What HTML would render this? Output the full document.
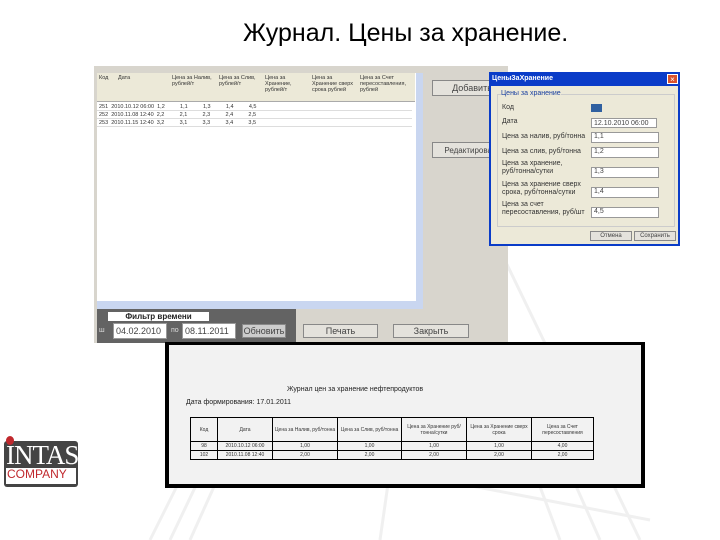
<!DOCTYPE html>
<html><head><meta charset="utf-8"><style>
body{margin:0;width:720px;height:540px;position:relative;overflow:hidden;background:#fff;font-family:"Liberation Sans",sans-serif}
.a{position:absolute}
.t{font-size:7px;color:#333}
.btn{position:absolute;background:#e4e2dc;border:1px solid #888;font-size:9px;color:#444;text-align:center;box-sizing:border-box;overflow:hidden;white-space:nowrap}
.inp{position:absolute;background:#fff;border:1px solid #999;box-sizing:border-box;font-size:7px;color:#444;padding-left:2px}
</style></head><body>
<svg class="a" style="left:0;top:0" width="720" height="540">
<g stroke="#f0f0f0" stroke-width="3" fill="none">
<path d="M150 540 L260 320 M170 540 L270 330 M190 540 L280 340"/>
<path d="M560 540 L470 300 M600 540 L520 360 M640 540 L500 250"/>
<path d="M380 540 L420 260 M230 440 L650 520"/>
</g></svg>
<div class="a" style="left:243px;top:19px;font-size:25px;color:#000;white-space:nowrap">Журнал. Цены за хранение.</div>

<!-- main window -->
<div class="a" style="left:94px;top:66px;width:414px;height:277px;background:#d8d5cd"></div>
<div class="a" style="left:97px;top:73px;width:319px;height:228px;background:#fff"></div>
<div class="a" style="left:97px;top:73px;width:318px;height:28px;background:#ece9d8;border-bottom:1px solid #aaa"></div>
<div class="a t" style="left:99px;top:75px;font-size:5.5px;line-height:6px">
<span class="a" style="left:0">Код</span><span class="a" style="left:19px">Дата</span>
<span class="a" style="left:73px;width:40px">Цена за Налив, рублей/т</span>
<span class="a" style="left:120px;width:40px">Цена за Слив, рублей/т</span>
<span class="a" style="left:166px;width:44px">Цена за Хранение, рублей/т</span>
<span class="a" style="left:213px;width:44px">Цена за Хранение сверх срока рублей</span>
<span class="a" style="left:261px;width:50px">Цена за Счет пересоставления, рублей</span></div>
<div class="a t" style="left:99px;top:103px;font-size:5.5px;line-height:8px;white-space:pre">251  2010.10.12 06:00  1,2          1,1          1,3          1,4          4,5
252  2010.11.08 12:40  2,2          2,1          2,3          2,4          2,5
253  2010.11.15 12:40  3,2          3,1          3,3          3,4          3,5</div>
<div class="a" style="left:97px;top:110px;width:315px;border-top:1px solid #ddd"></div>
<div class="a" style="left:97px;top:118px;width:315px;border-top:1px solid #ddd"></div>
<div class="a" style="left:97px;top:126px;width:315px;border-top:1px solid #ddd"></div>
<div class="a" style="left:416px;top:73px;width:7px;height:236px;background:#c9d6f0"></div>
<div class="a" style="left:97px;top:301px;width:326px;height:8px;background:#c9d6f0"></div>
<div class="btn" style="left:432px;top:80px;width:80px;height:16px;line-height:15px">Добавить</div>
<div class="btn" style="left:432px;top:142px;width:80px;height:16px;line-height:15px;font-size:8px">Редактировать</div>
<div class="a" style="left:97px;top:309px;width:199px;height:34px;background:#636363"></div>
<div class="a" style="left:108px;top:312px;width:101px;height:9px;background:#fff;font-size:8px;font-weight:bold;text-align:center;line-height:9px;color:#222">Фильтр времени</div>
<div class="a" style="left:99px;top:327px;font-size:7px;color:#ddd">ш</div>
<div class="inp" style="left:113px;top:323px;width:54px;height:16px;line-height:14px;font-size:9px">04.02.2010</div>
<div class="a" style="left:171px;top:327px;font-size:7px;color:#ddd">по</div>
<div class="inp" style="left:182px;top:323px;width:54px;height:16px;line-height:14px;font-size:9px">08.11.2011</div>
<div class="btn" style="left:242px;top:324px;width:44px;height:14px;line-height:13px;background:#ccc">Обновить</div>
<div class="btn" style="left:303px;top:324px;width:75px;height:14px;line-height:13px">Печать</div>
<div class="btn" style="left:393px;top:324px;width:76px;height:14px;line-height:13px">Закрыть</div>

<!-- dialog -->
<div class="a" style="left:489px;top:72px;width:191px;height:174px;background:#0a3cc8"></div>
<div class="a" style="left:491px;top:86px;width:187px;height:158px;background:#ece9d8"></div>
<div class="a" style="left:492px;top:75px;font-size:7px;color:#fff;font-weight:bold">ЦеныЗаХранение</div>
<div class="a" style="left:667px;top:74px;width:11px;height:10px;background:#d9522c;border:1px solid #fff;color:#fff;font-size:8px;text-align:center;line-height:10px;box-sizing:border-box">×</div>
<div class="a" style="left:497px;top:94px;width:176px;height:131px;border:1px solid #ccc"></div>
<div class="a t" style="left:501px;top:90px;background:#ece9d8;color:#1a40a0">Цены за хранение</div>
<div class="a t" style="left:502px;top:104px">Код</div>
<div class="a" style="left:591px;top:104px;width:11px;height:8px;background:#3060a0"></div>
<div class="a t" style="left:502px;top:118px">Дата</div>
<div class="inp" style="left:591px;top:118px;width:66px;height:10px;line-height:9px">12.10.2010 06:00</div>
<div class="a t" style="left:502px;top:133px">Цена за налив, руб/тонна</div>
<div class="inp" style="left:591px;top:132px;width:68px;height:11px">1,1</div>
<div class="a t" style="left:502px;top:148px">Цена за слив, руб/тонна</div>
<div class="inp" style="left:591px;top:147px;width:68px;height:11px">1,2</div>
<div class="a t" style="left:502px;top:160px;line-height:8px">Цена за хранение,<br>руб/тонна/сутки</div>
<div class="inp" style="left:591px;top:167px;width:68px;height:11px">1,3</div>
<div class="a t" style="left:502px;top:181px;line-height:8px">Цена за хранение сверх<br>срока, руб/тонна/сутки</div>
<div class="inp" style="left:591px;top:187px;width:68px;height:11px">1,4</div>
<div class="a t" style="left:502px;top:201px;line-height:8px">Цена за счет<br>пересоставления, руб/шт</div>
<div class="inp" style="left:591px;top:207px;width:68px;height:11px">4,5</div>
<div class="btn" style="left:590px;top:231px;width:42px;height:10px;font-size:6px;line-height:9px">Отмена</div>
<div class="btn" style="left:634px;top:231px;width:42px;height:10px;font-size:6px;line-height:9px">Сохранить</div>

<!-- print preview -->
<div class="a" style="left:165px;top:342px;width:480px;height:146px;background:#000"></div>
<div class="a" style="left:169px;top:345px;width:472px;height:139px;background:#f2f2f2"></div>
<div class="a" style="left:287px;top:386px;font-size:7px;color:#222">Журнал цен за хранение нефтепродуктов</div>
<div class="a" style="left:186px;top:399px;font-size:7px;color:#222">Дата формирования: 17.01.2011</div>
<table class="a" style="left:190px;top:417px;border-collapse:collapse;font-size:5px;color:#333;text-align:center" cellspacing="0">
<tr style="height:24px"><td style="border:1px solid #000;width:24px">Код</td><td style="border:1px solid #000;width:52px">Дата</td><td style="border:1px solid #000;width:62px">Цена за Налив, руб/тонна</td><td style="border:1px solid #000;width:61px">Цена за Слив, руб/тонна</td><td style="border:1px solid #000;width:62px">Цена за Хранение руб/тонна/сутки</td><td style="border:1px solid #000;width:62px">Цена за Хранение сверх срока</td><td style="border:1px solid #000;width:59px">Цена за Счет пересоставления</td></tr>
<tr style="height:9px"><td style="border:1px solid #000">98</td><td style="border:1px solid #000">2010.10.12 06:00</td><td style="border:1px solid #000">1,00</td><td style="border:1px solid #000">1,00</td><td style="border:1px solid #000">1,00</td><td style="border:1px solid #000">1,00</td><td style="border:1px solid #000">4,00</td></tr>
<tr style="height:9px"><td style="border:1px solid #000">102</td><td style="border:1px solid #000">2010.11.08 12:40</td><td style="border:1px solid #000">2,00</td><td style="border:1px solid #000">2,00</td><td style="border:1px solid #000">2,00</td><td style="border:1px solid #000">2,00</td><td style="border:1px solid #000">2,00</td></tr>
</table>

<!-- logo -->
<div class="a" style="left:4px;top:441px;width:74px;height:46px;background:#444;border-radius:3px"></div>
<div class="a" style="left:6px;top:436px;width:8px;height:9px;background:#c0282d;border-radius:50%"></div>
<div class="a" style="left:6px;top:441px;font-family:'Liberation Serif',serif;font-size:27px;color:#fff;letter-spacing:-1px;line-height:28px">INTAS</div>
<div class="a" style="left:6px;top:468px;width:70px;height:16px;background:#fff"></div>
<div class="a" style="left:7px;top:467px;font-size:12px;color:#c0282d;line-height:14px">COMPANY</div>
</body></html>
